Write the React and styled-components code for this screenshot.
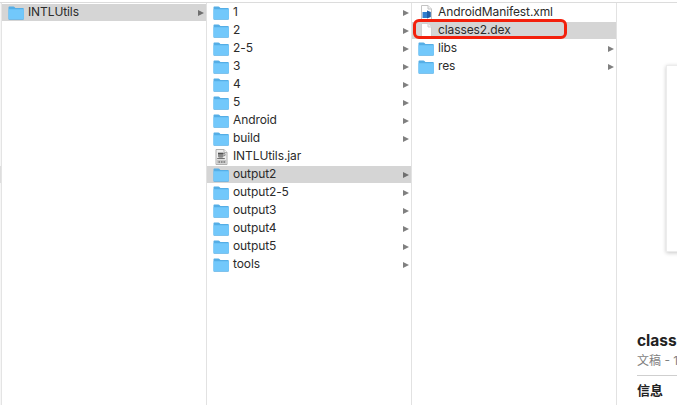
import React from "react";
import styled, { createGlobalStyle } from "styled-components";

const GlobalStyle = createGlobalStyle`
  html, body {
    margin: 0;
    padding: 0;
    background: #fff;
  }
  body {
    font-family: Inter, "Liberation Sans", Arial, "Noto Sans CJK SC", sans-serif;
    color: #2b2b2b;
  }
`;

const Window = styled.div`
  width: 677px;
  height: 405px;
  overflow: hidden;
  display: flex;
  flex-direction: column;
  background: #fff;
  padding-top: 2px;
  box-sizing: border-box;
`;

const TopLine = styled.div`
  height: 1px;
  flex: none;
  background: #dcdcdc;
`;

const Browser = styled.div`
  flex: 1;
  display: flex;
  min-height: 0;
`;

const Gutter = styled.div`
  width: 2px;
  flex: none;
  display: flex;
  flex-direction: column;
  justify-content: flex-start;
  background: #f6f6f6;
  border-right: 1px solid #e4e4e4;
  box-sizing: border-box;
`;

const GutterMark = styled.div`
  height: 17px;
  margin-top: 163px;
  background: #dedede;
`;

const Column = styled.div`
  width: 205px;
  flex: none;
  box-sizing: border-box;
  border-right: 1px solid #e2e2e2;
  display: flex;
  flex-direction: column;
`;

const Row = styled.div`
  position: relative;
  height: 17px;
  margin-top: 1px;
  display: flex;
  align-items: center;
  gap: 4px;
  padding: 0 2px 0 6px;
  font-size: 12px;
  letter-spacing: -0.1px;
  background: ${(p) => (p.$selected ? "#d5d5d5" : "transparent")};
`;

const Name = styled.span`
  flex: 1;
  white-space: nowrap;
  line-height: 15px;
  margin-bottom: 3px;
`;

const Chevron = styled.span`
  flex: none;
  width: 0;
  height: 0;
  border-left: 6px solid ${(p) => (p.$selected ? "#6f6f6f" : "#808080")};
  border-top: 3.5px solid transparent;
  border-bottom: 3.5px solid transparent;
`;

const RedMark = styled.div`
  position: absolute;
  left: 1px;
  top: -3px;
  width: 154px;
  height: 20px;
  box-sizing: border-box;
  border: 3px solid #f3200c;
  border-radius: 6px;
`;

const Preview = styled.div`
  flex: 1;
  min-width: 0;
  display: flex;
  flex-direction: column;
  padding-left: 20px;
`;

const Thumbnail = styled.div`
  width: 120px;
  height: 185px;
  flex: none;
  margin: 62px 0 0 29px;
  background: #fff;
  border: 1px solid #ececec;
  box-shadow: 0 1px 4px rgba(0, 0, 0, 0.22);
`;

const Title = styled.div`
  margin-top: 80px;
  font-size: 15.5px;
  line-height: 18px;
  font-weight: 700;
  white-space: nowrap;
  color: #222;
`;

const Kind = styled.div`
  margin-top: 3px;
  padding-bottom: 7px;
  font-size: 12px;
  line-height: 15px;
  color: #7f7f7f;
  white-space: nowrap;
  border-bottom: 1px solid #cfcfcf;
`;

const Section = styled.div`
  margin-top: 6px;
  font-size: 13px;
  line-height: 17px;
  font-weight: 700;
  color: #222;
`;

const Folder = () => (
  <svg width="16" height="14" viewBox="0 0 16 14" style={{ flex: "none" }}>
    <path d="M0.5 1.4C0.5 0.8 0.9 0.4 1.5 0.4H5.4C5.9 0.4 6.2 0.6 6.5 0.9L7.4 2H15C15.4 2 15.8 2.4 15.8 2.8V12.9C15.8 13.4 15.4 13.8 15 13.8H1.2C0.8 13.8 0.5 13.4 0.5 12.9Z" fill="#55aee6" />
    <path d="M0.5 3.2H15.8V12.6C15.8 12.9 15.5 13.1 15.2 13.1H1.1C0.8 13.1 0.5 12.9 0.5 12.6Z" fill="#72c8fb" />
  </svg>
);

const JarFile = () => (
  <svg width="16" height="16" viewBox="0 0 16 16" style={{ flex: "none" }}>
    <path d="M3 0.5H11L14 3.5V15.5H3Z" fill="#eeeeee" stroke="#b0b0b0" />
    <path d="M11 0.5V3.5H14" fill="#fafafa" stroke="#b0b0b0" />
    <path d="M5 3.5H10.5V7.2C10.5 8.4 9.6 8.8 7.8 8.8C6 8.8 5 8.4 5 7.2Z" fill="#8a8a8a" />
    <path d="M5 4.6H10.5" stroke="#4c4c4c" />
    <path d="M10.5 4.6H12V6.6H10.5" fill="none" stroke="#8a8a8a" />
    <path d="M4.2 9.6H11.8" stroke="#666" />
    <rect x="4" y="11" width="9" height="3.6" fill="#c4c4c4" />
    <path d="M5.5 13H7M8 13H9.5M10.5 13H12" stroke="#555" />
  </svg>
);

const DocFile = () => (
  <svg width="16" height="15" viewBox="0 0 16 15" style={{ flex: "none" }}>
    <path d="M3.5 0.5H10L13.5 4V14.5H3.5Z" fill="#fff" stroke="#cfcfcf" />
    <path d="M10 0.5V4H13.5" fill="#f2f2f2" stroke="#cfcfcf" />
  </svg>
);

const XmlFile = () => (
  <svg width="16" height="15" viewBox="0 0 16 15" style={{ flex: "none" }}>
    <path d="M3.5 0.5H10L13.5 4V14.5H3.5Z" fill="#fff" stroke="#c4c4c4" />
    <path d="M10 0.5V4H13.5" fill="#f2f2f2" stroke="#c4c4c4" />
    <rect x="4.5" y="7" width="5.5" height="6" fill="#2f7fd0" />
    <path d="M9 5.5L12.8 7V12L9 13.5Z" fill="#1f5fa8" />
  </svg>
);

const icons = { folder: Folder, jar: JarFile, doc: DocFile, xml: XmlFile };

const columns = [
  [{ name: "INTLUtils", icon: "folder", more: true, selected: true }],
  [
    ...["1", "2", "2-5", "3", "4", "5", "Android", "build"].map((name) => ({ name, icon: "folder", more: true })),
    { name: "INTLUtils.jar", icon: "jar" },
    { name: "output2", icon: "folder", more: true, selected: true },
    ...["output2-5", "output3", "output4", "output5", "tools"].map((name) => ({ name, icon: "folder", more: true })),
  ],
  [
    { name: "AndroidManifest.xml", icon: "xml" },
    { name: "classes2.dex", icon: "doc", selected: true, marked: true },
    { name: "libs", icon: "folder", more: true },
    { name: "res", icon: "folder", more: true },
  ],
];

const App = () => (
  <Window>
    <GlobalStyle />
    <TopLine />
    <Browser>
      <Gutter>
        <GutterMark />
      </Gutter>
      {columns.map((items, i) => (
        <Column key={i}>
          {items.map((item) => {
            const Icon = icons[item.icon];
            return (
              <Row key={item.name} $selected={item.selected}>
                <Icon />
                <Name>{item.name}</Name>
                {item.more && <Chevron $selected={item.selected} />}
                {item.marked && <RedMark />}
              </Row>
            );
          })}
        </Column>
      ))}
      <Preview>
        <Thumbnail />
        <Title>classes2.dex</Title>
        <Kind>文稿 - 1 MB</Kind>
        <Section>信息</Section>
      </Preview>
    </Browser>
  </Window>
);

export default App;
